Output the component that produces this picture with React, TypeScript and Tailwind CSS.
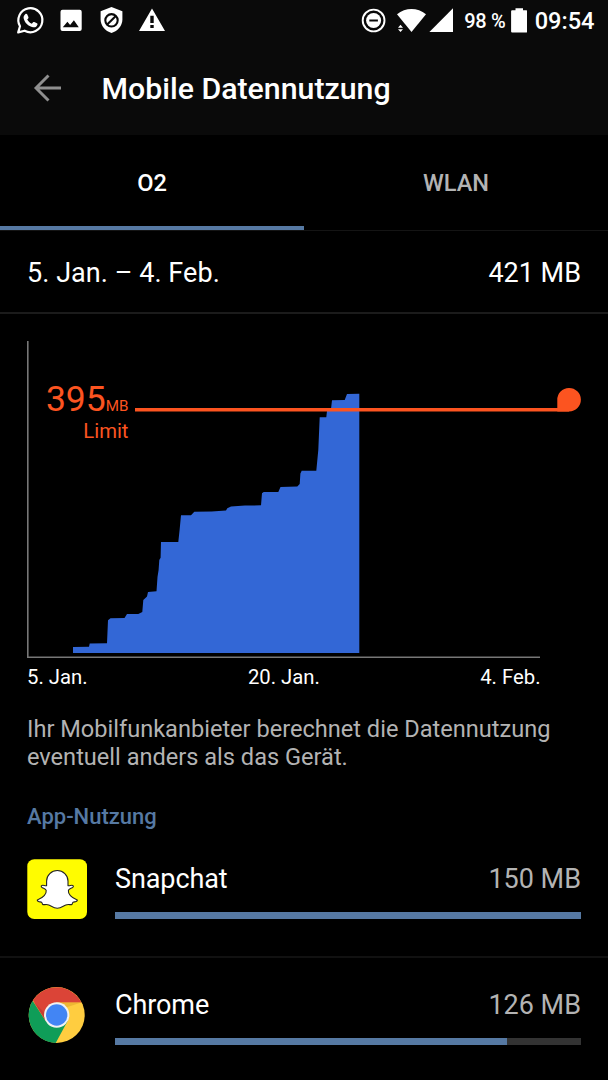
import type { ReactNode } from 'react'

type AppUsage = { name: string; amount: string; percent: number; icon: ReactNode }

// cumulated usage, left to right
const USAGE_POINTS =
  '73,653 73,647 89,646.8 89.7,643.4 107,643.3 108,620.3 110.5,618.3 124.5,618 127,614 138.3,613.9 142.3,612 143.3,600 147,596.6 148,592 156.5,591.3 157.5,577 158.6,570 159.3,560 160.6,557.7 161,542 178.3,542 179.7,529 181,515.3 191,515.3 194.3,511.8 211.7,511.4 226,510.6 227.3,508.3 231,506.4 245,505.6 261,505.3 262,493.3 263.7,492 278.3,492 280.5,487.1 297.3,486.6 299.7,484 300.4,473.5 301.7,470.7 316.3,470.7 318.3,450 319.7,417.3 326.3,417.3 327,411 331,409 332,400.3 344.7,400 347,394 359.3,393.8 359.3,653'

function StatusBar() {
  return (
    <div className="flex h-10 items-center justify-between text-white">
      <svg className="h-10 w-[180px]" viewBox="0 0 180 40" fill="currentColor">
        <path d="M18.2 32.4l1.8-6.2a12 12 0 1 1 4.6 4.5z" fill="none" stroke="currentColor" strokeWidth="2.2" strokeLinejoin="round" />
        <path d="M25.2 14.2c.8-.7 1.7-.6 2.1.3l1.1 2.6c.2.5.1.9-.2 1.3l-1 1.2c1.1 2 2.5 3.3 4.6 4.2l1.3-1.5c.3-.4.7-.5 1.2-.3l2.6 1.3c.6.3.7.7.5 1.4-.6 2-2.3 2.9-4.4 2.5-4.8-1-8.3-4.3-9.3-8.7-.4-1.7.2-3.2 1.5-4.3z" />
        <path
          fillRule="evenodd"
          d="M62.5 9.7h17.2a2 2 0 0 1 2 2v17.4a2 2 0 0 1-2 2H62.5a2 2 0 0 1-2-2V11.7a2 2 0 0 1 2-2zM62.8 27.2h16l-4.9-7-3.8 4.8-2.7-3.2z"
        />
        <path d="M111.5 7l10.9 4.3v8.3c0 6-4.5 11.6-10.9 13.5-6.4-1.9-10.9-7.5-10.9-13.5v-8.3z" />
        <g fill="none" stroke="#0a0a0a" strokeWidth="2.1">
          <circle cx="111.5" cy="20.3" r="6.2" />
          <path d="M107.2 24.6l8.6-8.6" />
        </g>
        <path fillRule="evenodd" d="M152 8.5L165 31h-26zM150.3 15.8v7.2h3.4v-7.2zM150.3 25v3h3.4v-3z" />
      </svg>
      <div className="flex items-center pr-[13.5px]">
        <svg className="h-10 w-[104px]" viewBox="355 0 104 40" fill="currentColor">
          <circle cx="373.6" cy="20.5" r="10.9" fill="none" stroke="currentColor" strokeWidth="1.9" />
          <circle cx="373.6" cy="20.5" r="7.5" />
          <path d="M369.3 19.5h8.6v2h-8.6z" fill="#0a0a0a" />
          <path d="M397 14.3c8.5-7 20.5-7 29 0L411.5 32z" />
          {/* data arrows, cut out of the wifi wedge */}
          <path d="M398 27.7l2.5-2.9 2.5 2.9zM398 29.2h5l-2.5 2.9z" />
          <path d="M453 8.3V32h-23.6z" />
        </svg>
        <span className="ml-[5px] w-[43px] pt-0.5 text-[20px] leading-10 font-medium tracking-[-0.3px] whitespace-nowrap">98 %</span>
        <svg className="ml-[4px] h-10 w-4" viewBox="511 0 16 40" fill="currentColor">
          <path d="M515.5 8.2h7.5v2h3.2a1 1 0 0 1 1 1v20.3a1 1 0 0 1-1 1h-14.1a1 1 0 0 1-1-1V11.2a1 1 0 0 1 1-1h3.4z" />
        </svg>
        <span className="ml-[7.5px] pt-0.5 text-[23.6px] leading-10 font-medium">09:54</span>
      </div>
    </div>
  )
}

function SnapchatIcon() {
  return (
    <svg className="size-[60px]" viewBox="0 0 60 60">
      <rect x=".3" y=".3" width="59.7" height="59.7" rx="7" fill="#fffc00" />
      <path
        d="M30.3 11.5c5.8 0 10.7 4.600 10.7 10.500v4.700c1.700.4 3.200-.9 4.700-.3 1.200.6.7 1.700-.5 2.300-1.400.8-3.500 1.200-3.800 2.700-.5 3.500 3 7.500 8.400 9.300 1 .4.400 1.300-.6 1.700-1.400.6-3.400.6-3.700 1.500-.3.700 0 1.500-1 1.700-1.500.2-3.600-.5-5.700.3-2.700 1-4.500 3.300-8.500 3.300s-5.800-2.300-8.500-3.300c-2.100-.8-4.200-.1-5.700-.3-1-.2-.7-1-1-1.700-.3-.9-2.300-.9-3.700-1.500-1-.4-1.600-1.300-.6-1.700 5.400-1.800 8.900-5.800 8.400-9.300-.3-1.500-2.400-1.900-3.800-2.700-1.200-.6-1.700-1.700-.5-2.300 1.500-.6 3 .7 4.700.3V22c0-5.900 4.900-10.500 10.700-10.500z"
        fill="#fff"
        stroke="#222"
        strokeWidth="1.1"
        strokeLinejoin="round"
      />
    </svg>
  )
}

function ChromeIcon() {
  return (
    <svg className="size-[60px]" viewBox="0 0 60 60">
      <circle cx="29.7" cy="30" r="28" fill="#ffcd40" />
      <path d="M5.6 15.8A28 28 0 0 0 28.7 58L40.5 36.3 29.7 30 18.9 36.3z" fill="#0f9d58" />
      <path d="M5.6 15.8A28 28 0 0 1 54.5 17.5H29.7L18.9 36.3 5.9 15.3z" fill="#db4437" />
      <path d="M5.7 15.8l12 12.2 1.2 8z" fill="#b7392d" opacity=".55" />
      <path d="M31 17.5h23.3L39 22.5z" fill="#e5ab2e" opacity=".65" />
      <circle cx="29.7" cy="30" r="12.7" fill="#f1f1f1" />
      <circle cx="29.7" cy="30" r="10.7" fill="#4285f4" />
    </svg>
  )
}

const APPS: AppUsage[] = [
  { name: 'Snapchat', amount: '150 MB', percent: 100, icon: <SnapchatIcon /> },
  { name: 'Chrome', amount: '126 MB', percent: 84.1, icon: <ChromeIcon /> },
]

function UsageChart() {
  return (
    <section className="relative px-[27px] pt-[27px]">
      <svg className="h-[318px] w-[554px]" viewBox="27 341 554 318">
        <path d="M27.8 341v316.2H540" fill="none" stroke="#777" strokeWidth="1.6" />
        <polygon points={USAGE_POINTS} fill="#3367d6" />
        <path d="M135 409.8H569" stroke="#fc5420" strokeWidth="3.4" />
        <path d="M557.3 411.5V400a11.8 11.8 0 1 1 11.8 11.5z" fill="#fc5420" />
      </svg>
      {/* limit label sits on the chart area */}
      <div className="absolute top-[63px] left-[27px] w-[101.5px] text-right text-[#fc5420]">
        <div className="h-[43px] text-[35.5px] leading-[44px] whitespace-nowrap">
          395<span className="text-[15.2px] leading-none">MB</span>
        </div>
        <div className="text-[20.3px] leading-[22px]">Limit</div>
      </div>
      <div className="flex w-[513.5px] justify-between pt-[5px] text-[20.3px] leading-[26px] text-white">
        <span>5. Jan.</span>
        <span>20. Jan.</span>
        <span>4. Feb.</span>
      </div>
    </section>
  )
}

export default function App() {
  return (
    <div className="flex h-[1080px] w-[608px] flex-col overflow-hidden bg-black font-[Roboto,sans-serif] text-white">
      <header className="h-[135px] shrink-0 bg-[#0a0a0a]">
        <StatusBar />
        <div className="flex h-[95px] items-center">
          <svg className="ml-[33px] h-[30px] w-[30px]" viewBox="0 0 30 30" fill="none" stroke="#8f8f8f" strokeWidth="2.9">
            <path d="M28 15H3M15.5 2.5L3 15l12.5 12.5" />
          </svg>
          <h1 className="ml-[38.5px] pt-[3px] text-[30.3px] leading-10 font-medium">Mobile Datennutzung</h1>
        </div>
      </header>

      <nav className="grid h-24 shrink-0 grid-cols-2 border-b border-[#141414] text-[23.6px] font-medium">
        <button className="border-b-4 border-[#5679a3] pt-1.5">O2</button>
        <button className="pt-0.5 text-[#b3b3b3]">WLAN</button>
      </nav>

      <div className="flex h-[83px] shrink-0 items-center justify-between border-b-2 border-[#1b1b1b] px-[27px] pt-1 text-[27px]">
        <span className="tracking-[0.05px]">5. Jan. – 4. Feb.</span>
        <span>421 MB</span>
      </div>

      <UsageChart />

      <p className="px-[27px] pt-[26px] text-[23.6px] leading-[27.5px] tracking-[-0.01px] text-[#b3b3b3]">
        Ihr Mobilfunkanbieter berechnet die Datennutzung eventuell anders als das Gerät.
      </p>

      <h2 className="px-[27px] pt-8 text-[22px] leading-[27px] font-medium text-[#5679a3]">App-Nutzung</h2>

      <ul className="pt-0.5">
        {APPS.map(app => (
          <li key={app.name} className="flex h-[126px] items-start border-b-2 border-[#111] px-[27px] pt-[27px]">
            {app.icon}
            <div className="ml-7 flex-1">
              <div className="flex h-[53px] justify-between pt-px text-[27px] leading-[38px]">
                <span className="tracking-[-0.1px]">{app.name}</span>
                <span className="text-[#b3b3b3]">{app.amount}</span>
              </div>
              <div className="h-[7px] bg-[#333]">
                <div className="h-full bg-[#5679a3]" style={{ width: `${app.percent}%` }} />
              </div>
            </div>
          </li>
        ))}
      </ul>
    </div>
  )
}
